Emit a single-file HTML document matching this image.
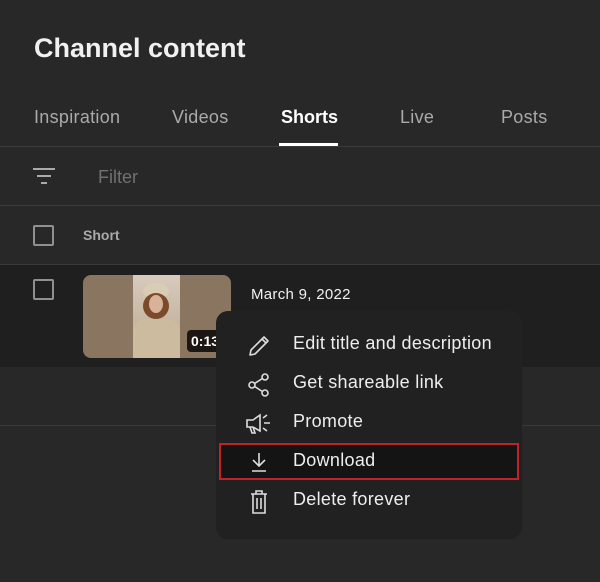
<!DOCTYPE html>
<html><head><meta charset="utf-8"><style>
*{margin:0;padding:0;box-sizing:border-box}
body{width:600px;height:582px;background:#282828;font-family:"Liberation Sans",sans-serif;color:#fff;position:relative;overflow:hidden}
.abs{position:absolute}
.tab{position:absolute;top:107px;font-size:18px;letter-spacing:0.3px;color:#aaa}
.line{position:absolute;left:0;width:600px;height:1px;background:#3a3a3a}
.cb{position:absolute;width:21px;height:21px;border:2px solid #909090;border-radius:2px}
.mi{position:absolute;left:293px;font-size:18px;letter-spacing:0.3px;color:#eee}
svg{position:absolute}
</style></head><body>
<div class="abs" style="left:34px;top:33px;font-size:27px;font-weight:bold;color:#f1f1f1">Channel content</div>
<div class="tab" style="left:34px">Inspiration</div>
<div class="tab" style="left:172px">Videos</div>
<div class="tab" style="left:281px;color:#fff;font-weight:bold;letter-spacing:0">Shorts</div>
<div class="tab" style="left:400px">Live</div>
<div class="tab" style="left:501px">Posts</div>
<div class="abs" style="left:279px;top:143px;width:59px;height:3px;background:#fff"></div>
<div class="line" style="top:146px"></div>
<svg style="left:32px;top:166px" width="24" height="20"><g stroke="#aaa" stroke-width="2"><line x1="1" y1="3" x2="23" y2="3"/><line x1="5" y1="10" x2="19" y2="10"/><line x1="9" y1="17" x2="15" y2="17"/></g></svg>
<div class="abs" style="left:98px;top:167px;font-size:18px;color:#717171">Filter</div>
<div class="line" style="top:205px"></div>
<div class="cb" style="left:33px;top:225px"></div>
<div class="abs" style="left:83px;top:227px;font-size:14px;font-weight:bold;color:#aaa">Short</div>
<div class="line" style="top:264px"></div>
<div class="abs" style="left:0;top:265px;width:600px;height:102px;background:#1f1f1f"></div>
<div class="cb" style="left:33px;top:279px"></div>
<div class="abs" style="left:83px;top:275px;width:148px;height:83px;border-radius:8px;background:#8a7660;overflow:hidden">
 <div class="abs" style="left:50px;top:0;width:47px;height:83px;background:linear-gradient(#d8cbbd,#b8a890)"></div>
 <div class="abs" style="left:60px;top:8px;width:26px;height:16px;border-radius:50%;background:#d9cdb5"></div>
 <div class="abs" style="left:60px;top:18px;width:26px;height:26px;border-radius:50%;background:#7a4a2a"></div>
 <div class="abs" style="left:66px;top:20px;width:14px;height:18px;border-radius:50%;background:#d8b39a"></div>
 <div class="abs" style="left:50px;top:44px;width:47px;height:39px;border-radius:12px 12px 0 0;background:#cdbb9f"></div>
 <div class="abs" style="left:104px;top:55px;width:44px;height:22px;border-radius:4px;background:rgba(0,0,0,.8);font-size:14px;font-weight:bold;padding:3px 4px">0:13</div>
</div>
<div class="abs" style="left:251px;top:286px;font-size:15px;letter-spacing:0.3px;color:#f1f1f1">March 9, 2022</div>
<div class="line" style="top:425px"></div>
<div class="abs" style="left:216px;top:311px;width:306px;height:228px;background:#212121;border-radius:12px"></div>
<div class="abs" style="left:219px;top:443px;width:300px;height:37px;background:#141414;border:2px solid #c0222a"></div>
<svg style="left:246px;top:333px" width="26" height="26" viewBox="0 0 26 26"><path d="M4 22 L5 17 L18 4 L22 8 L9 21 Z M16 6 L20 10" fill="none" stroke="#ddd" stroke-width="1.6" stroke-linejoin="round"/></svg>
<div class="mi" style="top:333px">Edit title and description</div>
<svg style="left:246px;top:372px" width="26" height="26" viewBox="0 0 26 26"><g fill="none" stroke="#ddd" stroke-width="1.6"><circle cx="19" cy="5" r="3"/><circle cx="6" cy="13" r="3"/><circle cx="19" cy="21" r="3"/><path d="M8.6 11.5 L16.4 6.5 M8.6 14.5 L16.4 19.5"/></g></svg>
<div class="mi" style="top:372px">Get shareable link</div>
<svg style="left:245px;top:411px" width="28" height="26" viewBox="0 0 28 26"><g fill="none" stroke="#ddd" stroke-width="1.6"><path d="M2 9 H8 L15 4 V20 L8 16 H2 Z M5 16 L7 22 H10 L8 16"/><path d="M19 12 H25 M18 7 L22 4 M18 17 L22 20"/></g></svg>
<div class="mi" style="top:411px">Promote</div>
<svg style="left:247px;top:450px" width="24" height="24" viewBox="0 0 24 24"><g fill="none" stroke="#ddd" stroke-width="1.6"><path d="M12 3 V15 M6 10 L12 16 L18 10 M5 21 H19"/></g></svg>
<div class="mi" style="top:450px">Download</div>
<svg style="left:247px;top:489px" width="24" height="26" viewBox="0 0 24 26"><g fill="none" stroke="#ddd" stroke-width="1.6"><path d="M4 5 H20 M9 5 V2 H15 V5 M6 5 V24 H18 V5 M10 9 V20 M14 9 V20"/></g></svg>
<div class="mi" style="top:489px">Delete forever</div>
</body></html>
